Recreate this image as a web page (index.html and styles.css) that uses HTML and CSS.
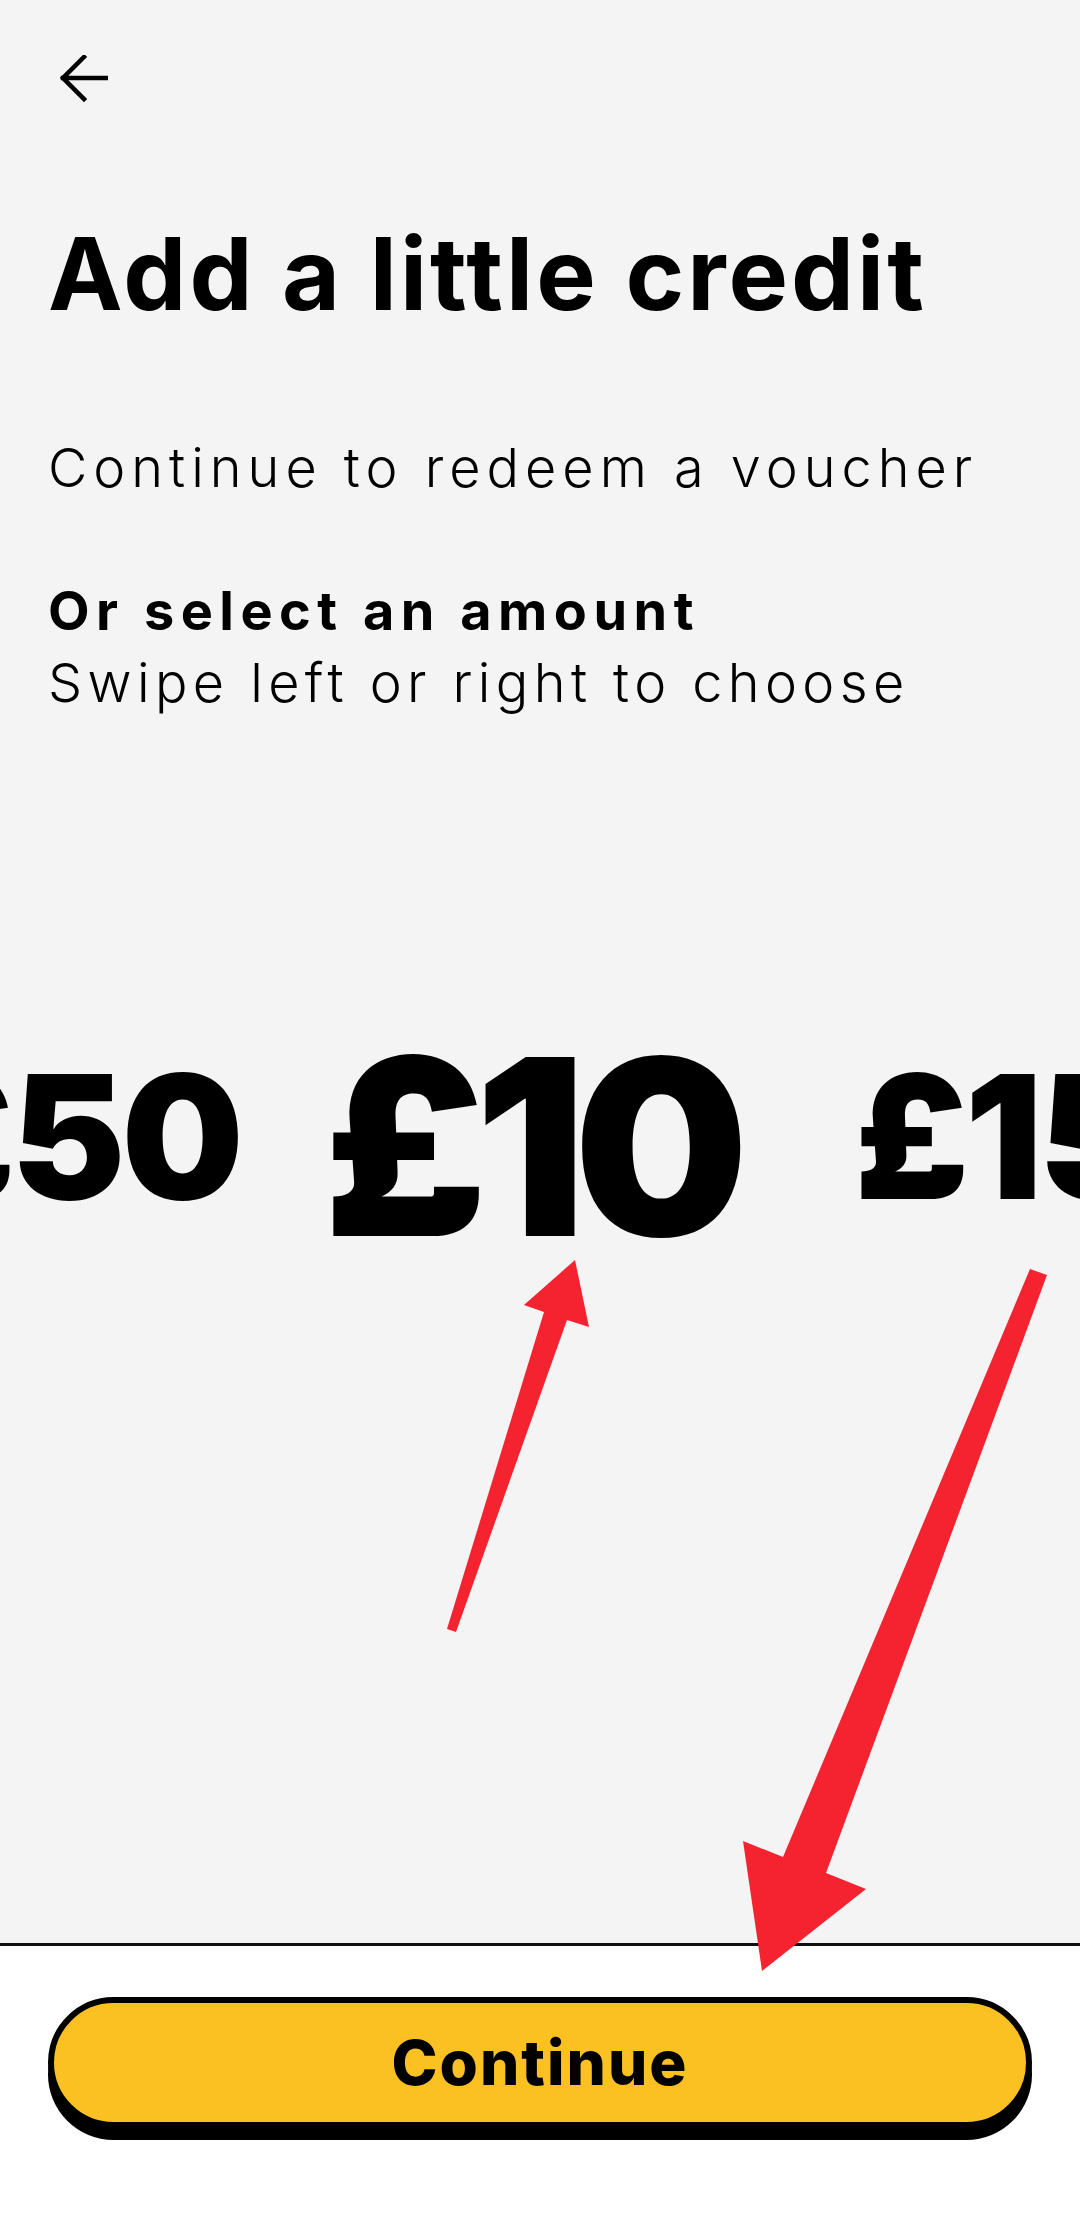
FILE: index.html
```html
<!DOCTYPE html>
<html lang="en">
  <head>
    <meta charset="UTF-8" />
    <meta name="viewport" content="width=device-width, initial-scale=1.0" />
    <title>Add a little credit</title>
    <link rel="stylesheet" href="styles.css">
  </head>
  <body>
    <div class="screen">
      <main class="content">
        <button class="back" aria-label="Back">
          <svg width="48" height="48" viewBox="0 0 48 48">
            <path d="M3 23 H47 M24 2 L3 23 L24 44" fill="none" stroke="#000" stroke-width="4.5" stroke-linecap="square" />
          </svg>
        </button>

        <h1>Add a little credit</h1>

        <p class="lead">Continue to redeem a voucher</p>

        <div class="pick">
          <strong>Or select an amount</strong>
          <span>Swipe left or right to choose</span>
        </div>

        <!-- Amount carousel -->
        <div class="amounts">
          <span class="amount side prev">£50</span>
          <span class="amount active">£10</span>
          <span class="amount side next">£15</span>
        </div>
      </main>

      <footer class="actions">
        <button class="continue">Continue</button>
      </footer>

      <!-- Red annotation arrows drawn on top of the screenshot -->
      <svg class="annot" viewBox="0 0 1080 2235" width="1080" height="2235">
        <polygon points="447,1629 544,1312 524,1305 575,1260 589,1327 567,1320 456,1632" />
        <polygon points="1030,1269 1047,1275 826,1873 866,1889 762,1971 743,1841 783,1857" />
      </svg>
    </div>
  </body>
</html>
```

FILE: styles.css
```css
/* Page */
body {
  margin: 0;
  background: #fff;
  color: #000;
  font-family: Inter, "Noto Sans", Arial, sans-serif;
}

.screen {
  position: relative;
  width: 1080px;
  height: 2235px;
  display: flex;
  flex-direction: column;
  overflow: hidden;
}

/* Top area */
.content {
  flex: 1;
  background: #f4f4f4;
  padding: 55px 0 0 48px;
  overflow: hidden;
}

.back {
  display: block;
  margin-left: 12px;
  padding: 0;
  border: none;
  background: none;
  width: 48px;
  height: 48px;
}

.back svg {
  display: block;
}

h1 {
  margin: 111px 0 0;
  font-size: 100px;
  line-height: 120px;
  font-weight: 700;
  letter-spacing: 3px;
}

.lead {
  margin: 101px 0 0;
  font-size: 54px;
  line-height: 65px;
  font-weight: 300;
  letter-spacing: 6px;
}

.pick {
  margin-top: 75px;
  display: flex;
  flex-direction: column;
  font-size: 54px;
  line-height: 72px;
}

.pick strong {
  font-weight: 700;
  letter-spacing: 6.5px;
}

.pick span {
  font-weight: 300;
  letter-spacing: 5.4px;
}

/* Amount carousel */
.amounts {
  margin: 305px 0 0 -48px;
  padding-right: 30px;
  display: flex;
  justify-content: center;
  align-items: center;
  white-space: nowrap;
}

.amount {
  font-size: 172px;
  line-height: 1;
  font-weight: 900;
  letter-spacing: -4px;
}

.amount.side {
  margin-bottom: 22px;
}

.amount.prev {
  margin-right: 84px;
}

.amount.next {
  margin-left: 118px;
}

.amount.active {
  font-size: 246px;
  letter-spacing: -12px;
}

/* Bottom action bar */
.actions {
  height: 292px;
  box-sizing: border-box;
  border-top: 3px solid #111;
  background: #fff;
  padding: 51px 48px 0;
}

.continue {
  display: block;
  width: 100%;
  height: 131px;
  border: 6px solid #000;
  border-radius: 66px;
  background: #fbc123;
  box-shadow: 0 12px 0 #000;
  font-family: Inter, "Noto Sans", Arial, sans-serif;
  font-size: 62px;
  font-weight: 800;
  letter-spacing: 2px;
  color: #000;
}

/* Annotation overlay */
.annot {
  position: absolute;
  left: 0;
  top: 0;
  pointer-events: none;
}

.annot polygon {
  fill: #f4232f;
}
```
